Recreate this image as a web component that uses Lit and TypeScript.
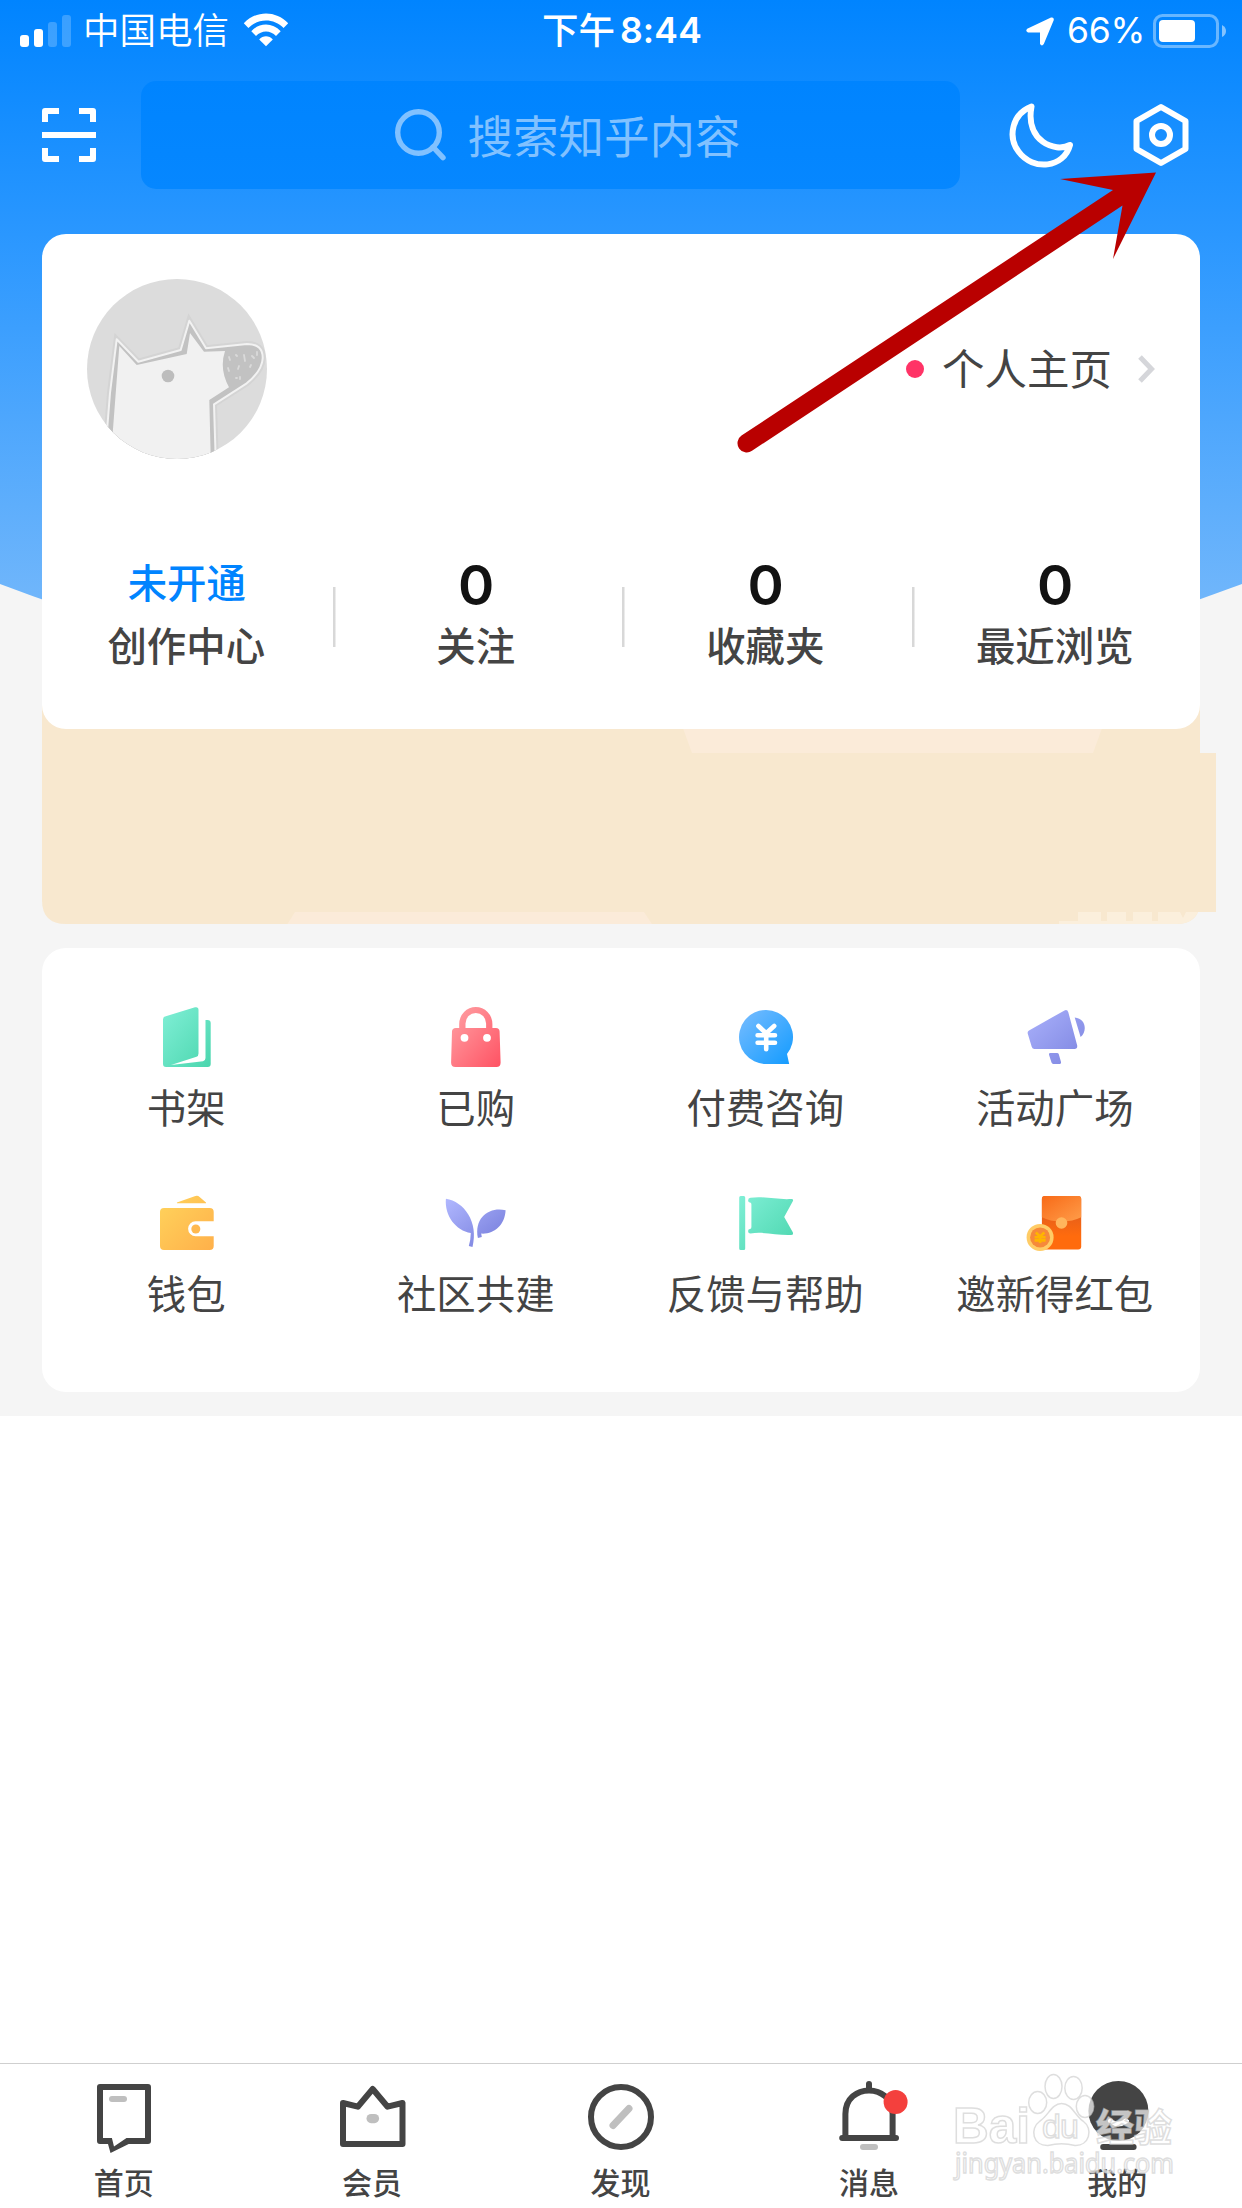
import { LitElement, html, css, svg } from "lit";
import { customElement } from "lit/decorators.js";
import { classMap } from "lit/directives/class-map.js";

interface Stat {
  value: string;
  label: string;
  accent?: boolean;
}

const STATS: Stat[] = [
  { value: "未开通", label: "创作中心", accent: true },
  { value: "0", label: "关注" },
  { value: "0", label: "收藏夹" },
  { value: "0", label: "最近浏览" },
];

const SERVICES = [
  {
    label: "书架",
    icon: svg`
      <linearGradient id="g" x1="0" y1="0" x2="1" y2="1"><stop offset="0" stop-color="#80efd6"/><stop offset="1" stop-color="#4bd6ae"/></linearGradient>
      <path fill="url(#g)" d="M6 12.5Q6 10.3 8 9.6L38 .3Q41.5 -.4 41.5 3V46.5Q41.5 49 39.500 49.7L14 57.9L46 54.2Q48.5 53.8 48.5 51V13H50.5Q53.7 13 53.7 16V57Q53.7 60 50.7 60H9Q6 60 6 57Z"/>`,
  },
  {
    label: "已购",
    icon: svg`
      <linearGradient id="g" x1="0" y1="0" x2="1" y2="1"><stop offset="0" stop-color="#ffa3a6"/><stop offset="1" stop-color="#ff5263"/></linearGradient>
      <path transform="translate(1.9 0)" fill="url(#g)" fill-rule="evenodd" d="M8 21H11.3V17A16.6 17 0 0 1 44.5 17V21H48Q51.6 21 51.7 24.5L52.7 55.5Q52.7 60 48.5 60H7.5Q3.2 60 3.2 55.5L4.1 24.5Q4.2 21 8 21ZM17.6 21H38.2V16.5A10.3 10.6 0 0 0 17.6 16.5ZM20.5 30.8A3.9 3.9 0 1 0 12.7 30.8A3.9 3.9 0 1 0 20.5 30.8ZM43 30.8A3.9 3.9 0 1 0 35.2 30.8A3.9 3.9 0 1 0 43 30.8Z"/>`,
  },
  {
    label: "付费咨询",
    icon: svg`
      <linearGradient id="g" x1="0" y1="0" x2="1" y2="1"><stop offset="0" stop-color="#79bdff"/><stop offset="1" stop-color="#129bff"/></linearGradient>
      <path fill="url(#g)" d="M30 57A27 27 0 1 1 51 47L53.2 57Z"/>
      <path fill="none" stroke="#fff" stroke-width="4.6" stroke-linecap="round" stroke-linejoin="round" d="M22.4 19L30.2 26.3L38.2 19M30.2 26V42.2M21.6 28.2H39M21.6 35.8H39"/>`,
  },
  {
    label: "活动广场",
    icon: svg`
      <linearGradient id="g" x1="0" y1="0" x2="1" y2="1"><stop offset="0" stop-color="#aab1fb"/><stop offset="1" stop-color="#7c84e0"/></linearGradient>
      <path fill="url(#g)" d="M4 23.5L39.5 3.4Q42.4 2.2 43.3 5.2L52.2 38.6Q52.6 42 49.5 42H9.5Q7.4 42 6.8 40L2.7 26.5Q2.3 24.4 4 23.5ZM49.7 10.6C61 11.5 62.5 24 55.6 30ZM25.2 46H32Q33.4 46 33.8 47.3L36 55Q36.2 57 34.5 57H28.3Q26.9 57 26.5 55.6L24 47.8Q23.7 46 25.2 46Z"/>`,
  },
  {
    label: "钱包",
    icon: svg`
      <linearGradient id="g" x1="0" y1="0" x2="1" y2="1"><stop offset="0" stop-color="#ffd45c"/><stop offset="1" stop-color="#ffb04a"/></linearGradient>
      <path fill="url(#g)" d="M7 15H52.7Q56.7 15 56.7 19V28.3H38.6A7.5 7.5 0 0 0 38.6 43.3H56.7V53Q56.7 57 52.7 57H7Q3 57 3 53V19Q3 15 7 15ZM19.9 9.4L38.4 3Q40.8 2.2 42.6 3.9L49 9.6V10.3H20Z"/>
      <circle cx="38.8" cy="36" r="4.5" fill="#ffb94f"/>`,
  },
  {
    label: "社区共建",
    icon: svg`
      <linearGradient id="g" x1="0" y1="0" x2="1" y2="1"><stop offset="0" stop-color="#b1b8ff"/><stop offset="1" stop-color="#7279d9"/></linearGradient>
      <path transform="translate(1.9 0)" fill="url(#g)" d="M-2 5.8C16 8.5 31 29 24.6 54L20.9 53.1Q22.8 47 22.9 40.1C8 37.5 -3.5 23 -2 5.8ZM57.7 17.2C42 13.4 26 24 30 44.9L33.9 44L33.3 40.6C46 41.5 57 32 57.7 17.2Z"/>`,
  },
  {
    label: "反馈与帮助",
    icon: svg`
      <linearGradient id="g" x1="0" y1="0" x2="1" y2="1"><stop offset="0" stop-color="#80efd6"/><stop offset="1" stop-color="#4bd6ae"/></linearGradient>
      <path fill="url(#g)" d="M4.7 3H7.8Q9.2 3 9.2 4.5V55.5Q9.2 57 7.8 57H4.7Q3.2 57 3.2 55.5V4.5Q3.2 3 4.7 3ZM14.5 4.8C28 2.8 41 7 55.5 6Q57.8 6 56.8 8.3L48.2 24L56.8 39.2Q57.8 41.8 55 42C41 42.6 29 38.4 14.5 40.4Q12 40.4 12.1 38Q12.2 36.2 14 36Q15.4 35.8 15.4 34V11.5Q15.4 9.7 14 9.6Q12.2 9.4 12.1 7.4Q12.1 5.2 14.5 4.8Z"/>`,
  },
  {
    label: "邀新得红包",
    icon: svg`
      <linearGradient id="g" x1="0" y1="0" x2="1" y2="1"><stop offset="0" stop-color="#f86a17"/><stop offset="1" stop-color="#ff9d4a"/></linearGradient>
      <linearGradient id="h" x1="0" y1="0" x2="0" y2="1"><stop offset="0.4" stop-color="#ea6118"/><stop offset="0.75" stop-color="#ff6b0d"/></linearGradient>
      <rect x="16.9" y="3" width="39.3" height="53.6" rx="3" fill="url(#h)"/>
      <path fill="url(#g)" d="M19.9 3H53.2Q56.2 3 56.2 6V24.2C46 29.8 27 29.8 16.9 24.2V6Q16.9 3 19.9 3Z"/>
      <circle cx="36.5" cy="30" r="5.8" fill="#ffb55c"/>
      <circle cx="15.1" cy="44.4" r="13.5" fill="#ffcc66"/>
      <circle cx="15.1" cy="44.4" r="10" fill="#f6893a"/>
      <path fill="none" stroke="#ffb400" stroke-width="2.6" d="M10.8 39.5L15.1 43.5L19.4 39.5M15.1 43V50M9.6 44.3H20.6M9.6 47.4H20.6"/>`,
  },
];

const TABS = [
  {
    label: "首页",
    icon: svg`
      <path fill="none" stroke="#444" stroke-width="6" stroke-linejoin="round" stroke-linecap="round" d="M17 61H16V7H64V61H45"/>
      <path fill="#444" d="M16 58H27.9L30 66.600L42.500 58H64V64H44.700L26.500 73L24 64H16Z"/>
      <path stroke="#bfbfbf" stroke-width="6" stroke-linecap="round" d="M28 19H40"/>`,
  },
  {
    label: "会员",
    icon: svg`
      <path fill="none" stroke="#444" stroke-width="6" d="M10 64V23L24.800 26.700L39.700 9L54.600 26.700L69.500 23V64Z" stroke-linejoin="round"/>
      <rect x="33.5" y="34" width="12.600" height="9.200" rx="4.600" fill="#bfbfbf"/>`,
  },
  {
    label: "发现",
    icon: svg`
      <circle cx="40" cy="37" r="30" fill="none" stroke="#444" stroke-width="6"/>
      <path stroke="#bfbfbf" stroke-width="7" stroke-linecap="round" d="M32 45.5L48 28.5"/>`,
  },
  {
    label: "消息",
    icon: svg`
      <path fill="none" stroke="#444" stroke-width="6" d="M16.4 58V34C16.4 2.500 63.6 2.500 63.6 34V58"/>
      <path stroke="#444" stroke-width="6" stroke-linecap="round" d="M13.2 58H67M40 4V9"/>
      <path stroke="#bfbfbf" stroke-width="6" stroke-linecap="round" d="M34 67H46"/>
      <circle cx="66.6" cy="22" r="12" fill="#f4403d"/>`,
  },
  {
    label: "我的",
    icon: svg`
      <circle cx="40.4" cy="31" r="30" fill="#444"/>
      <path fill="#fff" d="M30 40Q32.5 36.5 35.3 40.3Q40 42.6 44.5 40.6Q47.5 36.4 51 40.2Q51.6 42.6 48.6 43.4Q40.5 49.4 32.4 43.4Q29.4 42.6 30 40Z"/>
      <path stroke="#444" stroke-width="6" stroke-linecap="round" d="M25.2 67H55.6"/>`,
  },
];

@customElement("status-bar")
class StatusBar extends LitElement {
  static styles = css`
    :host {
      display: grid;
      grid-template-columns: 1fr auto 1fr;
      align-items: center;
      height: 62px;
      padding: 0 16px 0 20px;
      color: #fff;
      font: 36px/40px Inter, "Noto Sans CJK SC", sans-serif;
    }
    .side { display: flex; align-items: center; }
    .end { justify-content: flex-end; }
    .cjk { font-family: "Noto Sans CJK SC", sans-serif; }
    .signal { margin-right: 12px; }
    .carrier { position: relative; top: -2px; font-size: 36.5px; font-weight: 350; }
    .wifi { margin: -2px 0 0 14px; }
    .time { display: flex; align-items: center; margin-right: 2px; font-weight: 600; }
    .time .cjk { position: relative; top: -2px; margin-right: 5px; font-size: 36.5px; font-weight: 500; }
    .digits { font-size: 35.5px; letter-spacing: 0.2px; }
    .percent { margin: 0 8px 0 13px; font-size: 35.5px; letter-spacing: -0.3px; }
    svg { display: block; }
  `;

  render() {
    return html`
      <div class="side">
        <svg class="signal" width="51" height="34" fill="#fff">
          <rect y="21" width="9" height="12" rx="3" />
          <rect x="14" y="15" width="9" height="18" rx="3" />
          <rect x="28" y="8" width="9" height="25" rx="3" opacity="0.22" />
          <rect x="42" y="1" width="9" height="32" rx="3" opacity="0.22" />
        </svg>
        <span class="cjk carrier">中国电信</span>
        <svg class="wifi" width="46" height="34" viewBox="0 0 46 34" fill="#fff">
          <path d="M.8 10.2C13 -2.9 33 -2.9 45.200 10.200L40.6 15C31 5 15 5 5.400 15Z" />
          <path d="M8.300 18.200C16.500 9.300 29.500 9.300 37.700 18.200L33 23C27.500 17 18.500 17 13 23Z" />
          <path d="M16.200 26.400C20 22.300 26 22.300 29.800 26.400L23 33.300Z" />
        </svg>
      </div>
      <div class="time"><span class="cjk">下午</span><span class="digits">8:44</span></div>
      <div class="side end">
        <svg width="28" height="29" viewBox="0 0 28 29" fill="#fff">
          <path d="M1.200 11.800L25 .6Q28 -.2 27.800 3L17.800 27Q16 29.800 14 27V15.500H2Q-1 14 1.200 11.800Z" />
        </svg>
        <span class="percent">66%</span>
        <svg width="73" height="34" viewBox="0 0 73 34">
          <rect x="1.500" y="1.500" width="63" height="31" rx="8" fill="none" stroke="#fff" stroke-opacity="0.4" stroke-width="3" />
          <rect x="6" y="6" width="36" height="22" rx="4" fill="#fff" />
          <path fill="#fff" fill-opacity="0.5" d="M69 11Q73 13 73 17T69 23Z" />
        </svg>
      </div>
    `;
  }
}

@customElement("search-header")
class SearchHeader extends LitElement {
  static styles = css`
    :host {
      display: flex;
      align-items: center;
      height: 108px;
      padding: 0 42px;
      font: 45.5px/60px "Noto Sans CJK SC", sans-serif;
    }
    .box {
      display: flex;
      align-items: center;
      justify-content: center;
      box-sizing: border-box;
      width: 819px;
      height: 108px;
      margin: 0 49px 0 45px;
      padding-left: 35px;
      border-radius: 15px;
      background: linear-gradient(#0084ff, #0687ff);
      color: #81c1ff;
    }
    .hint { margin: -3px 0 0 20px; }
    .moon { margin-right: 57px; }
    svg { display: block; flex: none; }
  `;

  render() {
    return html`
      <svg width="54" height="54" fill="none" stroke="#fff" stroke-width="6" stroke-linejoin="round">
        <path d="M3 14V3H17M37 3H51V14M51 40V51H37M17 51H3V40" />
        <path d="M0 27H54" />
      </svg>
      <div class="box">
        <svg width="52" height="52" fill="none" stroke="#81c1ff" stroke-width="5.400">
          <circle cx="23.500" cy="23.500" r="20.800" />
          <path d="M38 38L48 48.600" stroke-linecap="round" />
        </svg>
        <span class="hint">搜索知乎内容</span>
      </div>
      <svg class="moon" width="66" height="66" fill="none" stroke="#fff" stroke-width="6" stroke-linejoin="round">
        <path d="M22.500 4.500C3 12 -1.500 35 9.500 49.500C24 69.500 55 66 61 43C46 51 16 39 22.500 4.500Z" />
      </svg>
      <svg width="58" height="66" fill="none" stroke="#fff" stroke-width="6" stroke-linejoin="round">
        <path d="M29 5L53.500 19V47L29 61L4.500 47V19Z" />
        <circle cx="29" cy="33" r="9" />
      </svg>
    `;
  }
}

@customElement("profile-card")
class ProfileCard extends LitElement {
  static styles = css`
    :host {
      display: flex;
      flex-direction: column;
      box-sizing: border-box;
      height: 495px;
      padding: 45px 0 0;
      border-radius: 24px;
      background: #fff;
      color: #444;
      font-family: "Noto Sans CJK SC", sans-serif;
    }
    .person {
      display: flex;
      align-items: center;
      justify-content: space-between;
      height: 180px;
      padding: 0 45px;
    }
    .home { display: flex; align-items: center; font-size: 42.5px; line-height: 60px; }
    .home span { margin: -4px 25px 0 18px; }
    .dot { width: 18px; height: 18px; border-radius: 50%; background: #ff3366; }
    .stats { display: grid; grid-template-columns: repeat(4, 1fr); margin-top: 92px; }
    .stat {
      display: grid;
      grid-template-rows: 62px 62px;
      place-items: center;
      height: 124px;
    }
    .stat + .stat { background: linear-gradient(#d8d8d8, #d8d8d8) left 1px top 36px / 2.5px 60px no-repeat; }
    .value { height: 62px; color: #121212; font: 600 55px/68px Inter, sans-serif; }
    .value.accent { color: #0084ff; font: 500 39.4px/60px "Noto Sans CJK SC", sans-serif; }
    .label { margin-left: -1px; font-size: 39.4px; font-weight: 500; line-height: 58px; }
    svg { display: block; }
  `;

  render() {
    return html`
      <div class="person">
        <svg width="180" height="180" viewBox="0 0 180 180">
          <clipPath id="round"><circle cx="90" cy="90" r="90" /></clipPath>
          <g clip-path="url(#round)">
            <rect width="180" height="180" fill="#dcdcdc" />
            <path fill="#c0c0c0" stroke="#d4d4d4" stroke-width="6" d="M17 190L23 114L29.700 60.300L51.300 82.700L93.700 71L102.300 41.700L119 69.300L160 65Q176 65 175.700 79.300Q175 92 159.700 104.300L127 125.300L129 190Z" />
            <path fill="#c2c2c2" stroke="#f2f2f2" stroke-width="2" stroke-linejoin="round" d="M17 190L23 114L29.700 60.300L51.300 82.700L93.700 71L102.300 41.700L119 69.300L160 65Q176 65 175.700 79.300Q175 92 159.700 104.300L127 125.300L129 190Z" />
            <path fill="#f1f1f1" d="M24.500 190L25.700 154L32.300 67L49.700 86L99.700 75L103 54L117 72.700L138 72Q132 90 142 108.300L122.300 121L124 190Z" />
            <circle cx="81" cy="97" r="6.300" fill="#bdbdbd" />
            <path stroke="#dadada" stroke-width="1.800" stroke-linecap="round" d="M142 78l1 3M149 76l1 1M157 76l1 6M165 77l2 2M141 89l1 3M151 90l1-3M149 99l1 0M153 98l0 2M163 88l1-2M170 73l0 3" />
          </g>
        </svg>
        <div class="home">
          <div class="dot"></div>
          <span>个人主页</span>
          <svg width="18" height="30" fill="none" stroke="#d5d6da" stroke-width="5">
            <path d="M3 3L14.500 15L3 27" />
          </svg>
        </div>
      </div>
      <div class="stats">
        ${STATS.map(
          (s) => html`<div class="stat">
            <div class=${classMap({ value: true, accent: !!s.accent })}>${s.value}</div>
            <div class="label">${s.label}</div>
          </div>`
        )}
      </div>
    `;
  }
}

/* One icon per shadow root, so that gradient ids stay local. */
@customElement("service-icon")
class ServiceIcon extends LitElement {
  static properties = { index: { type: Number } };
  declare index: number;

  static styles = css`
    :host { display: block; width: 60px; height: 60px; }
    svg { display: block; overflow: visible; }
  `;

  constructor() {
    super();
    this.index = 0;
  }

  render() {
    return html`<svg width="60" height="60" viewBox="0 0 60 60">${SERVICES[this.index].icon}</svg>`;
  }
}

@customElement("service-grid")
class ServiceGrid extends LitElement {
  static styles = css`
    :host {
      display: grid;
      grid-template-columns: repeat(4, 1fr);
      grid-auto-rows: 186px;
      box-sizing: border-box;
      height: 444px;
      padding-top: 59px;
      border-radius: 24px;
      background: #fff;
      color: #444;
      font: 39.4px/60px "Noto Sans CJK SC", sans-serif;
    }
    .item { display: flex; flex-direction: column; align-items: center; }
    .item span { margin: 9px 1px 0 0; }
  `;

  render() {
    return SERVICES.map((s, i) => html`<div class="item">
      <service-icon .index=${i}></service-icon><span>${s.label}</span>
    </div>`);
  }
}

@customElement("tab-bar")
class TabBar extends LitElement {
  static styles = css`
    :host {
      display: grid;
      grid-template-columns: repeat(5, 1fr);
      box-sizing: border-box;
      height: 145px;
      padding-top: 16px;
      border-top: 1px solid #cfcfcf;
      background: #fff;
      color: #444;
      font: 500 30px/40px "Noto Sans CJK SC", sans-serif;
    }
    .tab { display: flex; flex-direction: column; align-items: center; }
    .tab span { margin: 1px 1px 0 0; }
    svg { display: block; overflow: visible; }
  `;

  render() {
    return TABS.map((t) => html`<div class="tab">
      <svg width="80" height="80" viewBox="0 0 80 80">${t.icon}</svg>
      <span>${t.label}</span>
    </div>`);
  }
}

@customElement("app-root")
class AppRoot extends LitElement {
  static styles = css`
    :host {
      position: relative;
      display: flex;
      flex-direction: column;
      width: 1242px;
      height: 2208px;
      overflow: hidden;
      background: #fff;
    }
    .page { position: relative; height: 1416px; background: #f5f5f5; }
    .backdrop { position: absolute; left: 0; top: 0; display: block; }
    .content { position: relative; display: flex; flex-direction: column; }
    .search { margin-top: 19px; }
    .cards { display: flex; flex-direction: column; margin-top: 45px; padding: 0 26px 0 42px; }
    .profile { position: relative; width: 1158px; }
    .promo { display: block; margin-top: -29px; }
    .services { width: 1158px; margin-top: 24px; }
    .spacer { flex: 1; }
    .overlay { position: absolute; left: 0; top: 0; pointer-events: none; }
    .mark { font-family: "Liberation Sans", "Noto Sans CJK SC", sans-serif; }
    .bold { font-weight: 700; }
    .url { font-family: "Noto Sans", sans-serif; }
  `;

  render() {
    return html`
      <div class="page">
        <svg class="backdrop" width="1242" height="710">
          <linearGradient id="sky" gradientUnits="userSpaceOnUse" x1="0" y1="0" x2="0" y2="600">
            <stop offset="0" stop-color="#0084ff" />
            <stop offset="0.390" stop-color="#2a97ff" />
            <stop offset="1" stop-color="#70b6fb" />
          </linearGradient>
          <path fill="url(#sky)" d="M0 0H1242V584Q621 820 0 584Z" />
        </svg>
        <div class="content">
          <status-bar></status-bar>
          <search-header class="search"></search-header>
          <div class="cards">
            <profile-card class="profile"></profile-card>
            <svg class="promo" width="1174" height="224" viewBox="42 700 1174 224">
              <path fill="#f8e8cf" d="M42 700H1200V753H1216V912H1198Q1193 924 1176 924H66Q42 924 42 900Z" />
              <path fill="#fbebd9" d="M680 720L692 753H1093L1105 720ZM287.500 924L295 912H644L652 924Z" />
              <path fill="#fbefdc" d="M1078 912H1101V921H1107V912H1126V921H1133V912H1152V921H1158V912H1180L1183 918L1186 912H1198Q1193 924 1176 924H1059V921H1078Z" />
            </svg>
            <service-grid class="services"></service-grid>
          </div>
        </div>
      </div>
      <div class="spacer"></div>
      <tab-bar></tab-bar>
      <svg class="overlay" width="1242" height="2208">
        <path fill="#b90000" d="M1156 172.500L1113 259L1122.500 205.600L752 450.800A9 9 0 0 1 741.500 435.500L1113 190L1060 179Z" />
        <g class="mark" fill="#fff" fill-opacity="0.700" stroke="#c8c8c8" stroke-opacity="0.600" stroke-width="1.500">
          <ellipse cx="1037.700" cy="2102.500" rx="9" ry="11" />
          <ellipse cx="1053.500" cy="2086.500" rx="8.500" ry="12" />
          <ellipse cx="1073.500" cy="2088" rx="8.700" ry="11.500" />
          <ellipse cx="1085" cy="2106.500" rx="8.700" ry="11" />
          <path d="M1061.500 2103.500C1072 2103.500 1075 2116 1083 2121C1094 2129 1089 2146 1075 2145.500C1065 2143 1058 2143 1048 2145.500C1033 2146 1029 2129 1040 2121C1048 2116 1052 2103.500 1061.500 2103.500Z" />
          <text class="bold" x="953" y="2143" font-size="50" textLength="77" lengthAdjust="spacingAndGlyphs">Bai</text>
          <text x="1042" y="2138" font-size="34" textLength="37">du</text>
          <text class="bold" x="1096" y="2141" font-size="38">经验</text>
          <text class="url" x="955" y="2173" font-size="27" textLength="219" lengthAdjust="spacingAndGlyphs">jingyan.baidu.com</text>
        </g>
      </svg>
    `;
  }
}
